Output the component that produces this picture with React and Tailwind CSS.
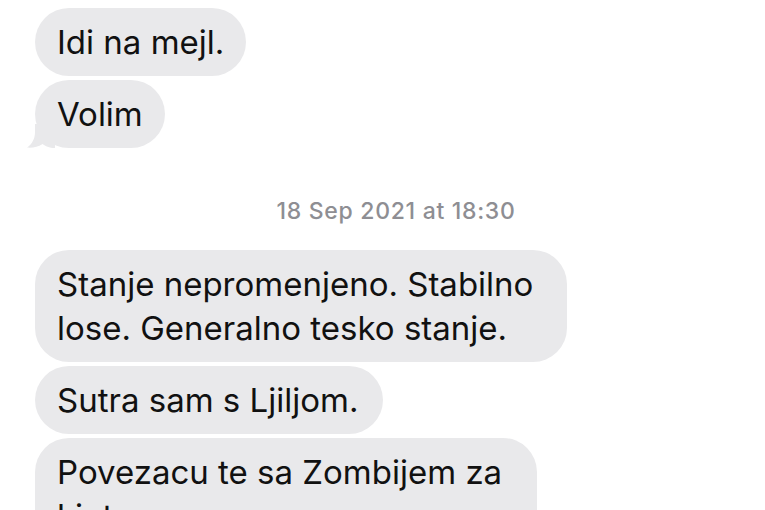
const font = { fontFamily: 'Inter, "Liberation Sans", Arial, sans-serif' }

function Bubble({ children, className = '', tail = false }) {
  return (
    <div className={`relative bg-[#e9e9eb] rounded-[34px] px-[22px] py-[12px] text-[33px] leading-[44px] text-[#111111] ${className}`}>
      {children}
      {tail && (
        <svg
          className="absolute left-[-12px] bottom-0"
          width="32"
          height="24"
          viewBox="0 0 32 24"
        >
          <path
            d="M12 0 L12 8 C12 15 9 20 4 23.6 C10 24 15 23 19.5 20 C22.5 22 26 24 32 24 L32 0 Z"
            fill="#e9e9eb"
          />
        </svg>
      )}
    </div>
  )
}

export default function App() {
  return (
    <div className="w-[765px] h-[510px] overflow-hidden bg-white" style={font}>
      <div className="flex flex-col items-start pl-[35px] pt-[8px]">
        {/* earlier group */}
        <div className="flex flex-col items-start gap-[4px]">
          <Bubble className="w-fit">Idi na mejl.</Bubble>
          <Bubble className="w-fit" tail>Volim</Bubble>
        </div>

        {/* timestamp */}
        <div className="self-stretch flex justify-center pr-[8px] pt-[49px] pb-[25px]">
          <span className="text-[23px] leading-[28px] tracking-[0.7px] font-medium text-[#8e8e93]">
            18 Sep 2021 at 18:30
          </span>
        </div>

        {/* new group */}
        <div className="flex flex-col items-start gap-[4px]">
          <Bubble className="w-[532px]">
            Stanje nepromenjeno. Stabilno lose. Generalno tesko stanje.
          </Bubble>
          <Bubble className="w-fit pr-[25px]">Sutra sam s Ljiljom.</Bubble>
          <Bubble className="w-[502px]">
            Povezacu te sa Zombijem za kintu.
          </Bubble>
        </div>
      </div>
    </div>
  )
}
